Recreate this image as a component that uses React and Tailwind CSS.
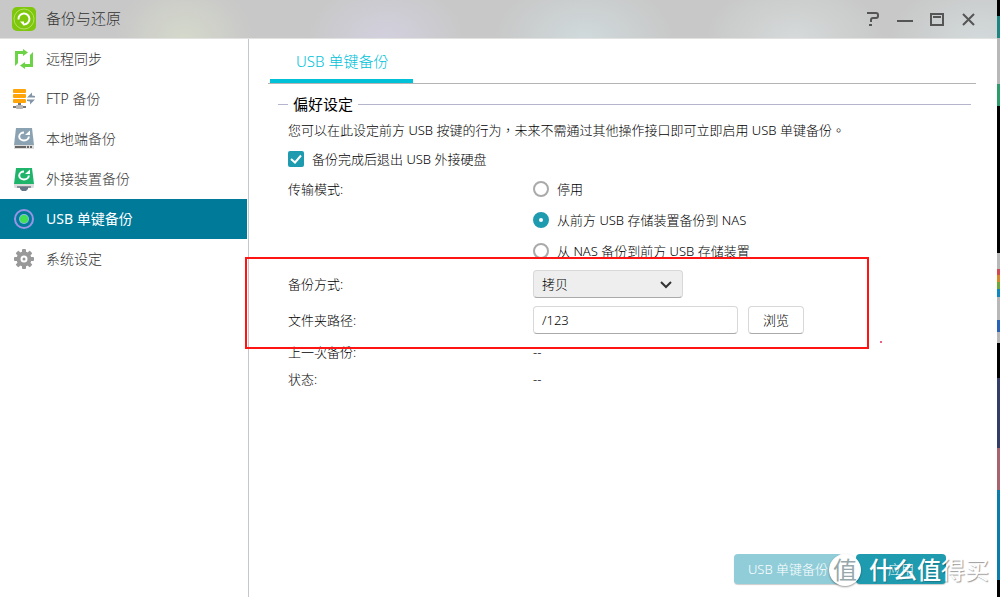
import React, { useState } from "react";

const RemoteSyncIcon = () => (
  <svg width="22" height="22" viewBox="0 0 22 22" fill="#6bd345">
    <path d="M2 3h8V1l5 3.500L10 8V6H5v9l-3 3z" />
    <path d="M20 19h-8v2l-5-3.500L12 14v2h5V7l3-3z" />
  </svg>
);

const FtpIcon = () => (
  <svg width="24" height="22" viewBox="0 0 24 22">
    <g fill="#ffa50a">
      <rect x="1" y="1" width="13" height="4" rx="1" />
      <rect x="1" y="6" width="13" height="4" rx="1" />
      <rect x="1" y="11" width="13" height="4" rx="1" />
    </g>
    <path d="M15 9.500l5-5v3l3 .5v1.500zM23 11.500l-5 5v-3l-3-.5v-1.500z" fill="#8296a7" />
    <path d="M6 15h3v3H6z" fill="#777" />
    <path d="M1 18h13v2H1z" fill="#777" />
    <rect x="4" y="17" width="7" height="4" rx="1" fill="#b5b5b5" />
  </svg>
);

const RestoreArrow = () => (
  <>
    <path d="M11 4.500a4.800 4 0 1 0 4.800 4" fill="none" stroke="#fff" strokeWidth="2" />
    <path d="M12 7h5V2.500z" fill="#fff" />
  </>
);

const LocalDiskIcon = () => (
  <svg width="22" height="22" viewBox="0 0 22 22">
    <path d="M3 0h16l2 17H1z" fill="#8ba2b3" />
    <path d="M1 17h20v4H1z" fill="#dcdcdc" />
    <path d="M2 18h11v2H2zM14 18h2v2h-2zM17 18h2v2h-2z" fill="#666" />
    <RestoreArrow />
  </svg>
);

const ExternalDiskIcon = () => (
  <svg width="22" height="24" viewBox="0 0 22 24">
    <path d="M3 1h16l2 16H1z" fill="#1eb56b" />
    <path d="M1 17h20v3l-1 1H2l-1-1z" fill="#dcdcdc" />
    <path d="M4 19h14v2H4z" fill="#8b9096" />
    <path d="M7 20h8v2l-2 2H9l-2-2z" fill="#647685" />
    <RestoreArrow />
  </svg>
);

const OneTouchIcon = () => (
  <svg width="22" height="22" viewBox="0 0 22 22">
    <circle cx="11" cy="11" r="9" fill="none" stroke="#9a94e6" strokeWidth="2" />
    <circle cx="11" cy="11" r="5" fill="#8fb8e8" />
    <circle cx="11" cy="11" r="4" fill="#42e052" />
  </svg>
);

const GearIcon = () => (
  <svg width="22" height="22" viewBox="0 0 22 22" fill="#999">
    <rect x="9" y="1" width="4" height="20" rx="1" />
    <rect x="9" y="1" width="4" height="20" rx="1" transform="rotate(45 11 11)" />
    <rect x="9" y="1" width="4" height="20" rx="1" transform="rotate(90 11 11)" />
    <rect x="9" y="1" width="4" height="20" rx="1" transform="rotate(135 11 11)" />
    <circle cx="11" cy="11" r="7.500" />
    <circle cx="11" cy="11" r="3.500" fill="#fff" />
    <circle cx="11" cy="11" r="1.500" />
  </svg>
);

const menu = [
  { id: "sync", label: "远程同步", icon: <RemoteSyncIcon /> },
  { id: "ftp", label: "FTP 备份", icon: <FtpIcon /> },
  { id: "local", label: "本地端备份", icon: <LocalDiskIcon /> },
  { id: "external", label: "外接装置备份", icon: <ExternalDiskIcon /> },
  { id: "usb", label: "USB 单键备份", icon: <OneTouchIcon /> },
  { id: "settings", label: "系统设定", icon: <GearIcon /> },
];

const modes = [
  { id: "off", label: "停用" },
  { id: "toNas", label: "从前方 USB 存储装置备份到 NAS" },
  { id: "fromNas", label: "从 NAS 备份到前方 USB 存储装置" },
];

const TitleBar = () => (
  <header className="flex h-[39px] items-center border-b border-[#e2e2e0] bg-[#c8c8c8] bg-[radial-gradient(ellipse_70px_60px_at_184px_40px,#d5d9cb,transparent),radial-gradient(ellipse_80px_60px_at_386px_40px,#d3d0de,transparent),radial-gradient(ellipse_90px_60px_at_584px_40px,#d0dadc,transparent),radial-gradient(ellipse_90px_60px_at_795px_40px,#d6dada,transparent),radial-gradient(ellipse_90px_60px_at_980px_40px,#d3dadb,transparent)] pr-5 pl-3">
    <svg width="24" height="24" viewBox="0 0 24 24" fill="none">
      <rect width="24" height="24" rx="5" fill="#7fc70d" />
      <circle cx="12" cy="12" r="10" stroke="#b4e064" />
      <path d="M6.500 12.500a5.500 5.500 0 1 1 5.500 5" stroke="#fff" strokeWidth="2" />
      <path d="M8 14.500h4V19z" fill="#fff" />
    </svg>
    <h1 className="ml-[10px] flex-1 pb-0.5 text-[15px] text-[#333]">备份与还原</h1>
    <div className="flex items-center gap-4 text-[#555]">
      <button aria-label="Help">
        <svg width="16" height="16" viewBox="0 0 16 16" fill="none" stroke="currentColor" strokeWidth="2">
          <path d="M2 2h9q2 0 2 2v1q0 2-2 2H8q-2 0-2 2v2M4 14h3" />
        </svg>
      </button>
      <button aria-label="Minimize">
        <svg width="16" height="16" viewBox="0 0 16 16" fill="currentColor">
          <path d="M0 9h16v2H0z" />
        </svg>
      </button>
      <button aria-label="Maximize">
        <svg width="16" height="16" viewBox="0 0 16 16" fill="none" stroke="currentColor" strokeWidth="2">
          <path d="M2 3h12v11H2zM4 6h8" />
        </svg>
      </button>
      <button aria-label="Close">
        <svg width="16" height="16" viewBox="0 0 16 16" fill="none" stroke="currentColor" strokeWidth="2">
          <path d="M2 3l11 11M13 3L2 14" />
        </svg>
      </button>
    </div>
  </header>
);

const Sidebar = ({ active, onSelect }) => (
  <nav className="w-[249px] shrink-0 border-r border-[#c6c6d0] pr-px">
    {menu.map((item) => (
      <button
        key={item.id}
        onClick={() => onSelect(item.id)}
        className={
          item.id === active
            ? "flex h-10 w-full items-center bg-[#007a99] pl-3 text-sm font-normal text-white"
            : "flex h-10 w-full items-center pl-3 text-sm text-[#333]"
        }
      >
        <span className="flex w-6 justify-center">{item.icon}</span>
        <span className="ml-[10px]">{item.label}</span>
      </button>
    ))}
  </nav>
);

// slice of the desktop that shows beside the window
const DesktopEdge = () => (
  <div className="flex w-[3px] shrink-0 flex-col bg-black">
    <div className="h-4" />
    <div className="h-[22px] bg-[#1f8583]" />
    <div className="h-[46px] bg-[#b8b8b8]" />
    <div className="h-[22px] bg-[#2f9a6b]" />
    <div className="h-[147px]" />
    <div className="h-4 bg-[#b8b8b8]" />
    <div className="h-[6px] bg-[#d04a50]" />
    <div className="h-[7px] bg-[#d58a2a]" />
    <div className="h-[7px] bg-[#6aa83a]" />
    <div className="h-2 bg-[#1187c0]" />
    <div className="h-[23px] bg-[#b8b8b8]" />
    <div className="h-3 bg-[#2a62b8]" />
    <div className="h-[11px] bg-[#b8b8b8]" />
    <div className="h-[35px]" />
    <div className="h-[70px] bg-[#343c68]" />
    <div className="h-[42px] bg-[#a8646e]" />
    <div className="h-[90px] bg-[#0b7dab]" />
  </div>
);

const Watermark = () => (
  <div className="pointer-events-none absolute right-[11px] bottom-[11px] flex items-center text-2xl font-medium text-white">
    <span className="mr-2 flex size-8 items-center justify-center rounded-full bg-white font-normal text-[#96a8ab] shadow-[0_1px_2px_#0006]">
      值
    </span>
    <span className="[text-shadow:1px_1px_1px_#0003]">什么值</span>
    <span className="font-normal [text-shadow:1px_1px_1px_#0006]">得买</span>
  </div>
);

const App = () => {
  const [active, setActive] = useState("usb");
  const [eject, setEject] = useState(true);
  const [mode, setMode] = useState("toNas");
  const [path, setPath] = useState("/123");

  return (
    <div className="relative flex min-h-screen bg-white font-['Noto_Sans','Noto_Sans_CJK_TC',sans-serif] text-[13px] leading-5 font-light text-black">
      <div className="flex min-w-0 flex-1 flex-col">
        <TitleBar />
        <div className="flex flex-1">
          <Sidebar active={active} onSelect={setActive} />

          <main className="flex min-w-0 flex-1 flex-col pl-[19px]">
            <div role="tablist" className="mr-[21px] flex border-b border-[#b4b4b4] pl-0.5">
              <button
                role="tab"
                aria-selected="true"
                className="h-11 border-b-4 border-[#00c1d8] pt-1 pr-[25px] pl-[26px] text-[15px] text-[#00c1d8]"
              >
                USB 单键备份
              </button>
            </div>

            <fieldset className="mt-[10px] mr-[26px] ml-[10px] border-t border-[#b4b4cc] pl-[10px]">
              <legend className="px-[5px] text-[15px] font-normal">偏好设定</legend>
              <p className="mt-[6px]">
                您可以在此设定前方 USB 按键的行为，未来不需通过其他操作接口即可立即启用 USB 单键备份。
              </p>

              <label className="mt-[9px] flex items-center gap-2">
                <input
                  type="checkbox"
                  checked={eject}
                  onChange={(e) => setEject(e.target.checked)}
                  className="peer sr-only"
                />
                <svg
                  width="16"
                  height="16"
                  viewBox="0 0 16 16"
                  className="rounded-xs bg-[#b4b4b4] peer-checked:bg-[#1f9bb0]"
                >
                  <path d="M3 8l4 3.500L13 4.500" fill="none" stroke="#fff" strokeWidth="2" />
                </svg>
                备份完成后退出 USB 外接硬盘
              </label>

              <div className="mt-[10px] flex">
                <span className="w-[245px] shrink-0">传输模式:</span>
                <div role="radiogroup" aria-label="传输模式" className="flex flex-col gap-[11px]">
                  {modes.map((m) => (
                    <label key={m.id} className="flex items-center gap-2">
                      <input
                        type="radio"
                        name="mode"
                        checked={mode === m.id}
                        onChange={() => setMode(m.id)}
                        className="size-4 appearance-none rounded-full border-2 border-[#aaa] bg-white checked:border-[6px] checked:border-[#1f9bb0]"
                      />
                      {m.label}
                    </label>
                  ))}
                </div>
              </div>

              <div className="mt-[9px] flex items-center">
                <label htmlFor="method" className="w-[245px] shrink-0">备份方式:</label>
                <div className="grid w-[150px]">
                  <select
                    id="method"
                    className="col-start-1 row-start-1 h-7 appearance-none rounded-sm border border-[#d8d8d8] border-b-[#aaa] bg-[#eee] px-2"
                  >
                    <option>拷贝</option>
                  </select>
                  <svg
                    width="12"
                    height="12"
                    viewBox="0 0 12 12"
                    className="pointer-events-none col-start-1 row-start-1 mr-[11px] self-center justify-self-end"
                  >
                    <path d="M1 4l5 5 5-5" fill="none" stroke="#333" strokeWidth="2" />
                  </svg>
                </div>
              </div>

              <div className="mt-2 flex items-center">
                <label htmlFor="path" className="w-[245px] shrink-0">文件夹路径:</label>
                <input
                  id="path"
                  value={path}
                  onChange={(e) => setPath(e.target.value)}
                  className="h-7 w-[205px] rounded-sm border border-[#d8d8d8] border-b-[#aaa] px-2"
                />
                <button className="ml-[10px] h-7 w-14 rounded-sm border border-[#d8d8d8] border-b-[#aaa]">
                  浏览
                </button>
              </div>

              <dl className="mt-2 grid grid-cols-[245px_1fr] gap-y-[7px]">
                <dt>上一次备份:</dt>
                <dd>--</dd>
                <dt>状态:</dt>
                <dd>--</dd>
              </dl>
            </fieldset>

            <footer className="mt-auto mr-[51px] mb-[13px] flex justify-end gap-[14px] text-white">
              <button className="h-[30px] rounded-sm bg-[#90cdd8] px-[14px] shadow-[0_1px_1px_#0003]">
                USB 单键备份
              </button>
              <button className="h-[30px] w-[90px] rounded-sm bg-[#1f9bb0] shadow-[0_1px_1px_#0003]">
                应用
              </button>
            </footer>
          </main>
        </div>
      </div>
      <DesktopEdge />

      {/* highlight drawn over the two backup fields */}
      <div className="pointer-events-none absolute top-[257px] left-[245px] h-[92px] w-[624px] border-2 border-[#ff1414]" />
      <div className="pointer-events-none absolute top-[341px] left-[880px] size-0.5 bg-[#f06080]" />
      <Watermark />
    </div>
  );
};

export default App;
